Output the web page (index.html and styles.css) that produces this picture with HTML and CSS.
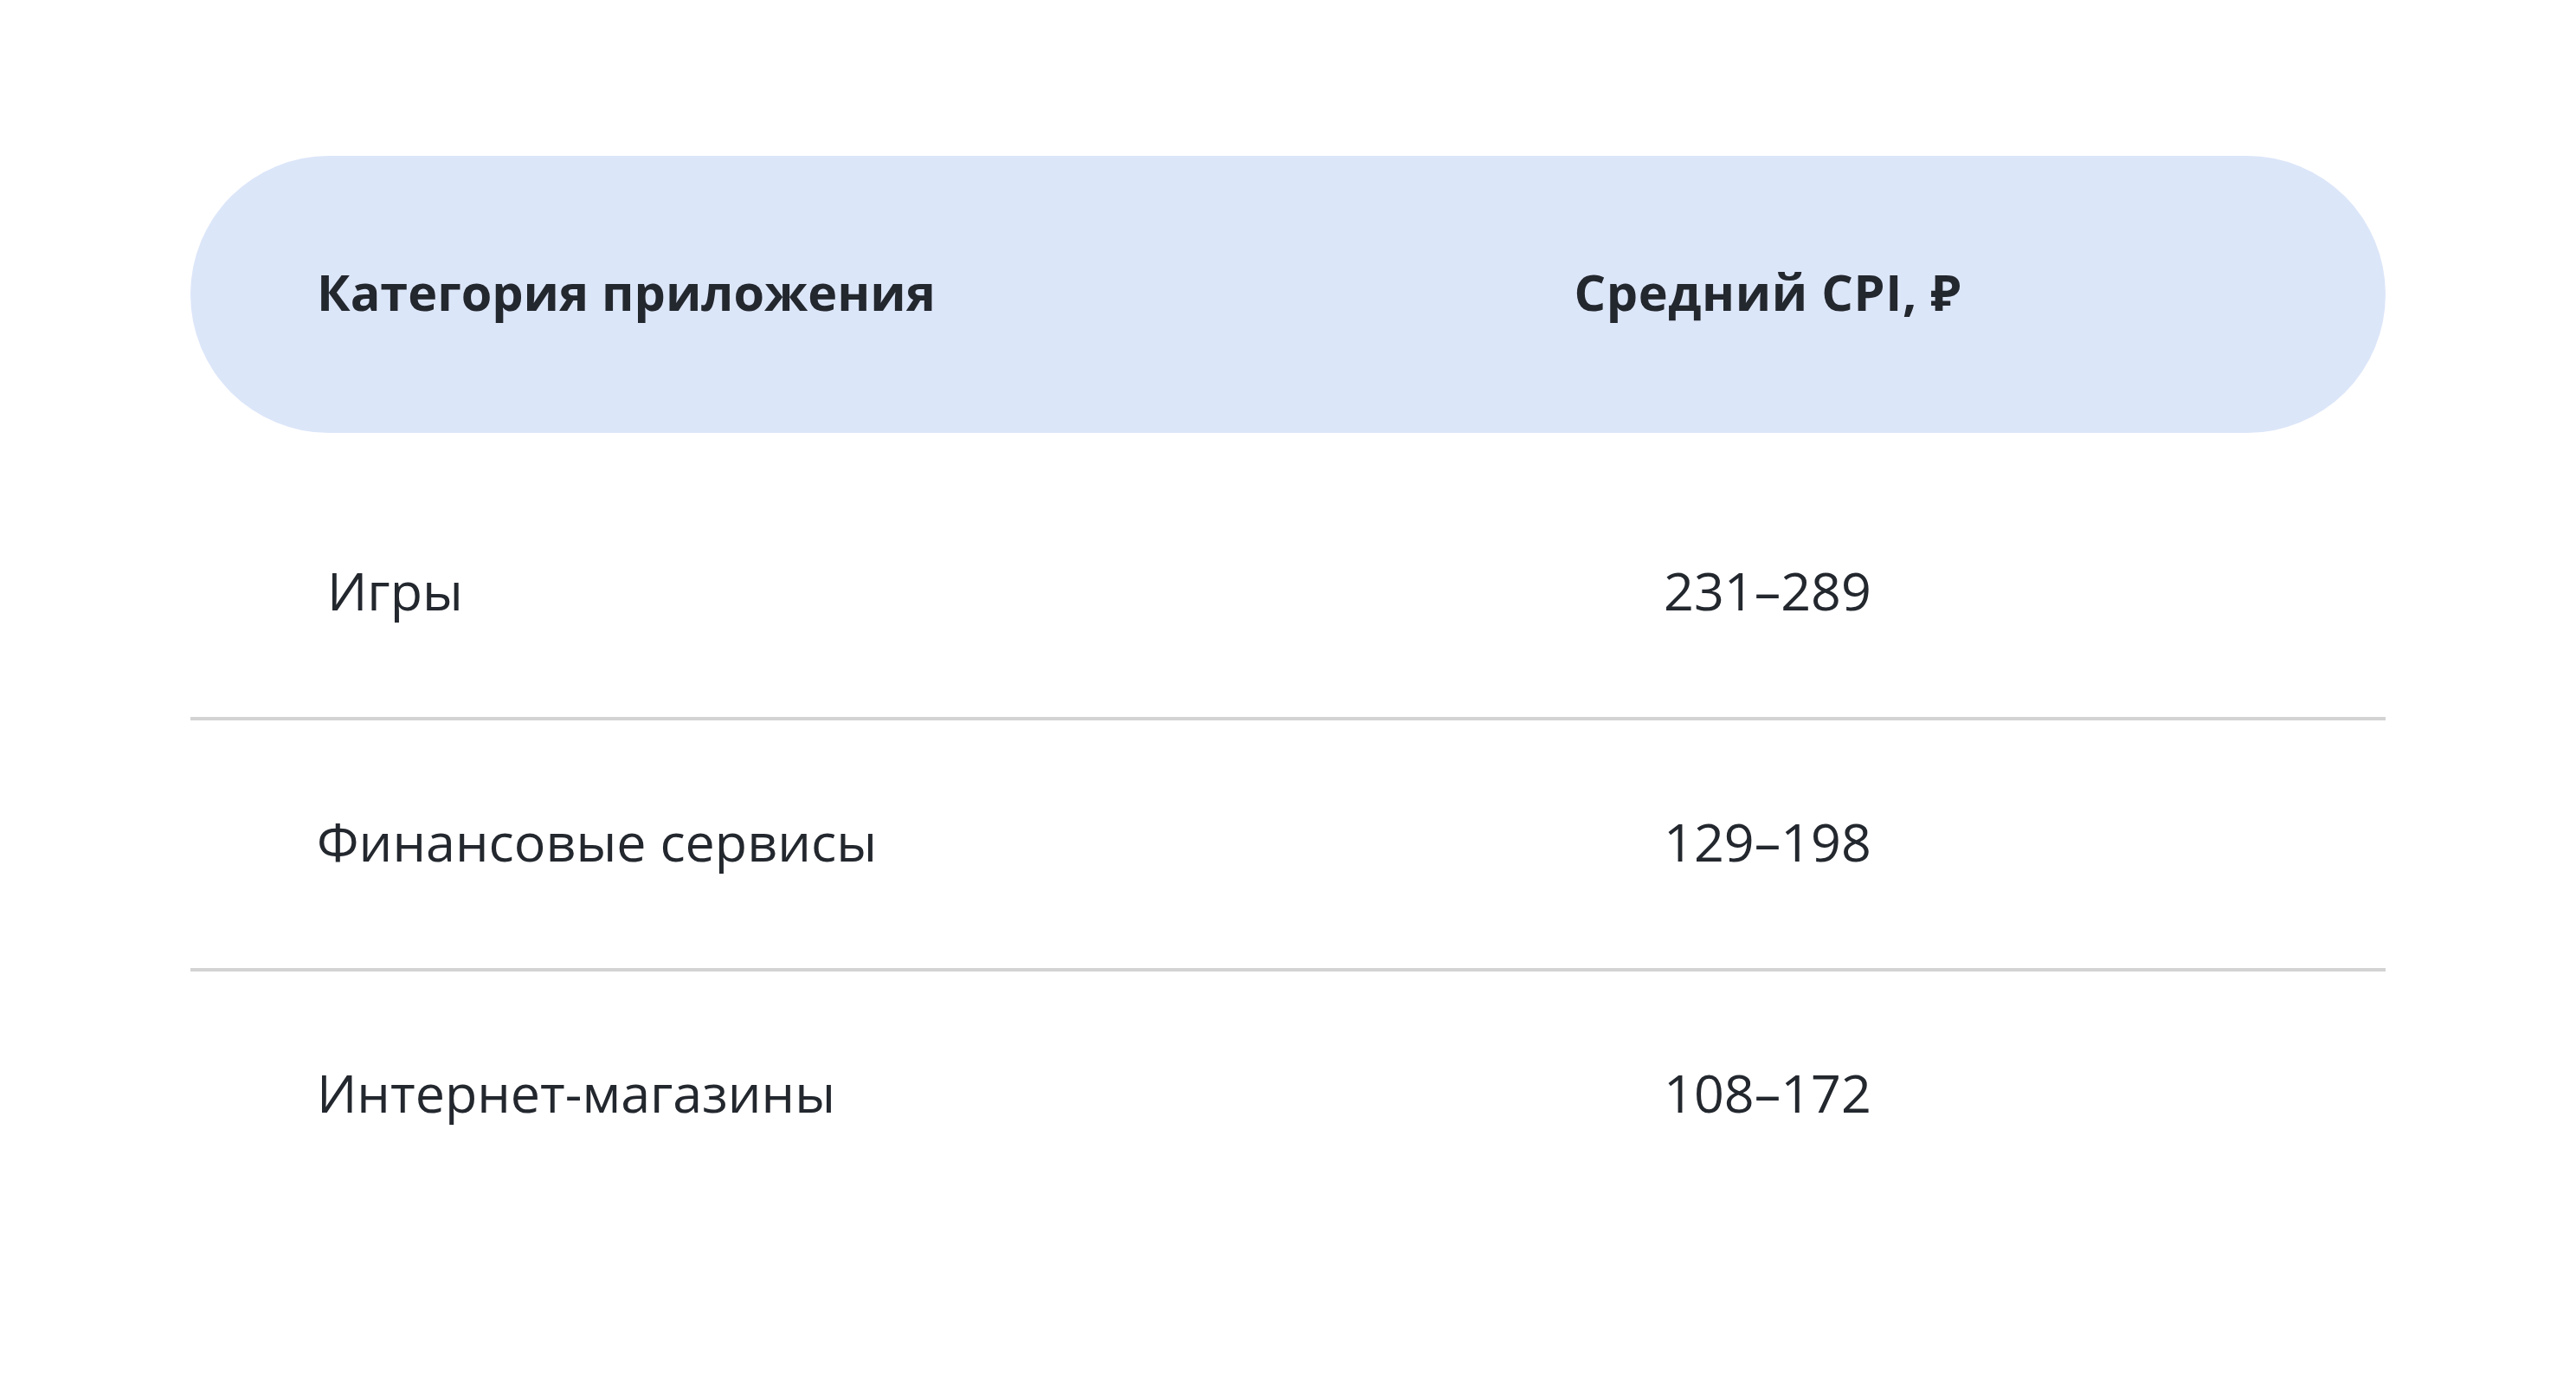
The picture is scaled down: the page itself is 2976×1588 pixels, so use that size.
FILE: index.html
```html
<!DOCTYPE html>
<html lang="ru">
<head>
<meta charset="utf-8">
<title>Средний CPI</title>
<link rel="stylesheet" href="styles.css">
</head>
<body>
<main class="page">
  <section class="cpi-table">
    <div class="row head">
      <div class="cell name">Категория приложения</div>
      <div class="cell value">Средний CPI, ₽</div>
    </div>
    <div class="body">
      <div class="row item">
        <div class="cell name indent">Игры</div>
        <div class="cell value">231–289</div>
      </div>
      <div class="row item">
        <div class="cell name">Финансовые сервисы</div>
        <div class="cell value">129–198</div>
      </div>
      <div class="row item">
        <div class="cell name">Интернет-магазины</div>
        <div class="cell value">108–172</div>
      </div>
    </div>
  </section>
</main>
</body>
</html>
```
FILE: styles.css
```css
html, body {
  margin: 0;
  background: #ffffff;
}
body {
  font-family: "Open Sans", "Noto Sans", sans-serif;
  color: #23272e;
}
.page {
  padding: 180px 0 0 220px;
}
.cpi-table {
  width: 2536px;
}
.row {
  display: grid;
  grid-template-columns: 1108px 1fr;
  align-items: center;
}
.head {
  height: 320px;
  border-radius: 160px;
  background: #dce6f9;
  font-weight: 700;
  font-size: 57.5px;
}
.head .value {
  letter-spacing: 0.6px;
}
.body {
  margin-top: 42px;
}
.item {
  height: 286px;
  font-size: 61px;
  font-weight: 400;
  border-bottom: 4px solid #d3d3d3;
}
.item:last-child {
  border-bottom: none;
}
.cell {
  line-height: 1;
  white-space: nowrap;
}
.head .cell {
  padding-bottom: 4px;
}
.item .cell {
  padding-bottom: 8px;
}
.name {
  padding-left: 146px;
}
.name.indent {
  padding-left: 158px;
}
.value {
  text-align: center;
}
```
